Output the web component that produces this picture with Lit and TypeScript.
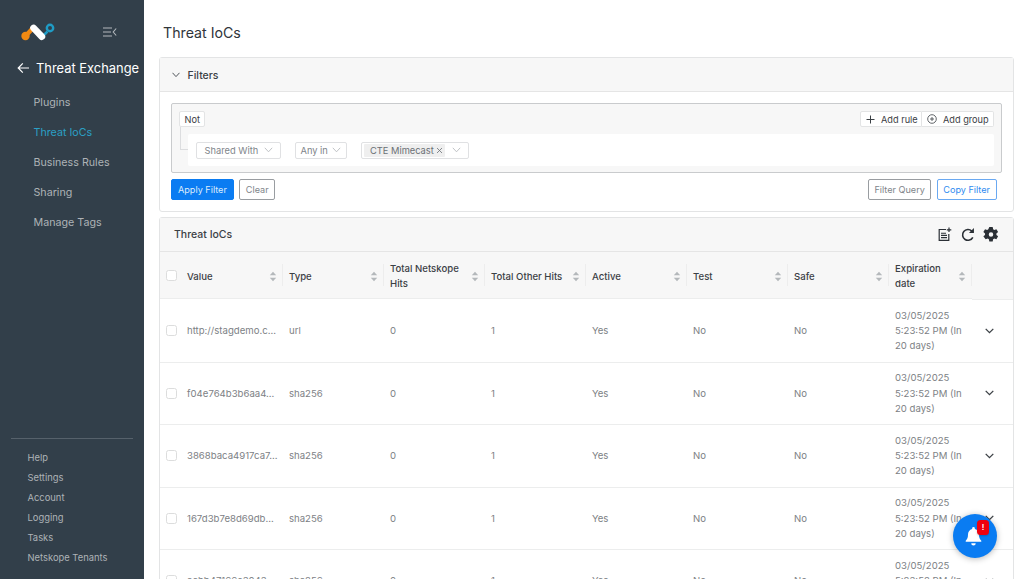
import { LitElement, html, css } from "lit";
import { customElement } from "lit/decorators.js";

const sortIcon = html`<svg class="sort" width="8" height="11" viewBox="0 0 8 11"><path d="M4 .8 7.2 4.2H.8z" fill="#b4b8bb"/><path d="M4 10.2.8 6.8h6.4z" fill="#b4b8bb"/></svg>`;
const chev = html`<svg class="sel" width="9" height="6" viewBox="0 0 9 6"><path d="M.8.8 4.5 4.8 8.2.8" fill="none" stroke="currentColor" stroke-width=".9"/></svg>`;

const rows = [
  ["http://stagdemo.c...", "url"],
  ["f04e764b3b6aa4...", "sha256"],
  ["3868baca4917ca7...", "sha256"],
  ["167d3b7e8d69db...", "sha256"],
  ["aebb47166c3043...", "sha256"],
];
const cols = ["Value", "Type", "Total Netskope Hits", "Total Other Hits", "Active", "Test", "Safe", "Expiration date"];

@customElement("app-root")
export class AppRoot extends LitElement {
  static styles = css`
    :host { display: block; height: 579px; overflow: hidden; position: relative; font-family: Inter, "Liberation Sans", sans-serif; background: #fff; color: #3b4045; }
    .app { display: flex; height: 579px; }
    aside { width: 144px; flex: none; background: #323f4a; display: flex; flex-direction: column; box-sizing: border-box; color: #aeb3b7; }
    .top { height: 56px; display: flex; align-items: center; padding: 8px 0 0 20px; box-sizing: border-box; }
    .logo { margin-left: 1px; flex: none; }
    .collapse { margin-left: 42px; flex: none; }
    .back { display: flex; align-items: center; height: 24px; padding-left: 17px; gap: 6px; color: #fff; font-size: 12.9px; white-space: nowrap; }
    .back svg { flex: none; }
    .nav { display: flex; flex-direction: column; padding: 8px 0 0 33.5px; }
    .nav div { height: 30px; line-height: 30px; font-size: 10.7px; white-space: nowrap; }
    .nav .on { color: #2ba0c6; }
    .foot { margin-top: auto; margin-left: 11px; margin-right: 11px; border-top: 1px solid #56616b; padding: 9px 0 11.5px 16.5px; font-size: 9.4px; }
    .foot div { height: 20px; line-height: 20px; white-space: nowrap; }
    main { flex: 1; min-width: 0; padding: 0 10px 0 15px; overflow: hidden; }
    h1 { margin: 0; height: 57px; line-height: 65px; padding-left: 4px; font-size: 14.2px; font-weight: 400; color: #30353a; }
    .card { border: 1px solid #e3e4e5; border-radius: 3px; background: #fff; }
    .card + .card { margin-top: 5px; }
    .chead { height: 34px; box-sizing: border-box; background: #f7f7f7; border-bottom: 1px solid #e5e5e5; display: flex; align-items: center; font-size: 10.5px; color: #3b4045; }
    .f-title { gap: 8px; padding: 1px 0 0 11.5px; font-weight: 500; }
    .f-body { padding: 11px; box-sizing: border-box; height: 119px; }
    .group { height: 70px; box-sizing: border-box; border: 1px solid #c9cbcd; border-radius: 2px; background: #f7f7f7; padding: 7px 7px 0 7px; position: relative; }
    .g-top { display: flex; justify-content: space-between; align-items: flex-start; }
    .tag { height: 16px; line-height: 15px; box-sizing: border-box; background: #fff; border: 1px solid #e3e4e5; border-radius: 2px; font-size: 9.2px; color: #3b4045; white-space: nowrap; }
    .not { padding: 0 4.5px; }
    .adds { display: flex; }
    .adds .tag { display: flex; align-items: center; padding-left: 5px; }
    .adds .r1 { width: 62px; border-radius: 2px 0 0 2px; gap: 6px; }
    .adds .r2 { width: 72px; border-left: 0; border-radius: 0 2px 2px 0; gap: 6px; }
    .adds svg { flex: none; }
    .rule { position: absolute; left: 9px; right: 7px; top: 30px; height: 32px; background: #fff; border-radius: 2px; display: flex; align-items: center; padding-left: 7.5px; font-size: 9.3px; color: #80858a; margin-left: 7px; }
    .link { position: absolute; left: 8px; top: 23px; width: 8px; height: 22px; border-left: 1px solid #dcdddf; border-bottom: 1px solid #dcdddf; }
    .sel { color: #b9bcbf; flex: none; }
    .box { height: 17px; box-sizing: border-box; border: 1px solid #e0e1e3; border-radius: 2px; display: flex; align-items: center; white-space: nowrap; }
    .b1 { width: 85.5px; padding-left: 8px; justify-content: space-between; padding-right: 7px; margin-right: 13.5px; }
    .b2 { width: 52px; padding-left: 5px; justify-content: space-between; padding-right: 5px; margin-right: 14px; }
    .b3 { width: 108px; padding-left: 2px; color: #6b7075; }
    .chip { background: #efefef; height: 13px; line-height: 13px; padding: 0 2px 0 6.5px; display: flex; align-items: center; gap: 2.5px; margin-right: 7px; border-radius: 1px; }
    .acts { display: flex; margin-top: 5.5px; justify-content: space-between; padding-right: 5.5px; }
    .acts > div { display: flex; gap: 5.5px; }
    .btn { height: 21.5px; box-sizing: border-box; border: 1px solid #999da1; border-radius: 2px; font-size: 9.1px; line-height: 19.5px; padding: 0 5.5px; color: #80858a; white-space: nowrap; }
    .btn.pri { background: #0a7cf2; border-color: #0a7cf2; color: #dcebfb; padding: 0 6px; }
    .btn.out { border-color: #6aa9f2; color: #2f8bf0; }
    .t-head { justify-content: space-between; padding: 0 13px 0 14px; font-weight: 500; }
    .tools { display: flex; align-items: center; color: #2b3036; }
    .tools .t2 { margin-left: 7.3px; }
    .tools .t3 { margin-left: 6.3px; }
    .grid { display: grid; grid-template-columns: 21px 102px 101px 101px 101px 101px 101px 101px 83px 1fr; }
    .th { height: 47px; background: #f7f7f7; display: flex; align-items: center; padding: 2px 4px 0 6px; box-sizing: border-box; justify-content: space-between; font-size: 9.6px; font-weight: 500; line-height: 15px; color: #3b4045; position: relative; border-bottom: 1px solid #eceded; }
    .th > span { display: block; max-width: 70px; }
    .th.n3 > span { max-width: 78px; }
    .th.n4 > span { max-width: 80px; }
    .th .sep { position: absolute; right: 0; top: 12px; bottom: 12px; width: 1px; background: #ededed; }
    .th .sort { margin-right: 2px; flex: none; }
    .cb { width: 11px; height: 11px; box-sizing: border-box; border: 1px solid #dcdddd; border-radius: 2.5px; background: #fff; display: block; }
    .ck { display: flex; align-items: center; justify-content: flex-end; box-sizing: border-box; }
    .ck .cb { margin-right: 4.5px; }
    .ckh { height: 47px; background: #f7f7f7; border-bottom: 1px solid #eceded; }
    .td { height: 62.5px; box-sizing: border-box; border-bottom: 1px solid #eceded; display: flex; align-items: center; padding-left: 6px; font-size: 9.6px; line-height: 15.3px; color: #7d8185; white-space: nowrap; }
    .td.exp { white-space: normal; padding-right: 8px; }
    .td.ex { justify-content: flex-end; padding-right: 19px; color: #3b4045; }
    .ckc { padding-left: 0; padding-right: 0; justify-content: flex-end; }
    .fab { position: absolute; left: 952.5px; top: 514px; width: 44px; height: 44px; border-radius: 50%; background: #0a7cf2; box-shadow: 0 1px 6px rgba(0,0,0,.28); display: flex; align-items: center; justify-content: center; }
    .fab svg { margin-right: 1.4px; }
    .badge { position: absolute; left: 24.5px; top: 6px; width: 12px; height: 15px; border-radius: 3.5px; background: #f0000f; color: #fff; font-size: 8px; font-weight: 600; line-height: 15px; text-align: center; box-shadow: 0 1px 2px rgba(0,0,0,.2); }
  `;

  render() {
    return html`<div class="app">
      <aside>
        <div class="top">
          <svg class="logo" width="40" height="24" viewBox="0 0 40 24">
            <path d="M4.5 16 13 7" stroke="#f28a13" stroke-width="4.5" fill="none"/>
            <circle cx="4.5" cy="16" r="4.2" fill="#f28a13"/>
            <path d="M21 17 26.5 11.5" stroke="#1f9cc6" stroke-width="2.5" fill="none"/>
            <circle cx="29" cy="8" r="3.2" fill="none" stroke="#1f9cc6" stroke-width="2.4"/>
            <path d="M12.6 8 20.8 16.6" stroke="#fff" stroke-width="6.8" stroke-linecap="round" fill="none"/>
          </svg>
          <svg class="collapse" width="14" height="10" viewBox="0 0 14 10"><path d="M0 1h9M0 5h8M0 9h9" stroke="#b3b8bc" stroke-width="1.1" fill="none"/><path d="M13.2 1.5 10.2 5l3 3.5" stroke="#b3b8bc" stroke-width="1.1" fill="none"/></svg>
        </div>
        <div class="back">
          <svg width="13" height="12" viewBox="0 0 13 12"><path d="M12 6H1.2M5.8 1.4 1.2 6l4.6 4.6" fill="none" stroke="#fff" stroke-width="1.2"/></svg>
          <span>Threat Exchange</span>
        </div>
        <div class="nav">
          <div>Plugins</div><div class="on">Threat IoCs</div><div>Business Rules</div><div>Sharing</div><div>Manage Tags</div>
        </div>
        <div class="foot">
          <div>Help</div><div>Settings</div><div>Account</div><div>Logging</div><div>Tasks</div><div>Netskope Tenants</div>
        </div>
      </aside>
      <main>
        <h1>Threat IoCs</h1>
        <section class="card">
          <div class="chead f-title">
            <svg width="8" height="6" viewBox="0 0 8 6"><path d="M.5.8 4 4.6 7.5.8" fill="none" stroke="#50555a" stroke-width="1"/></svg>
            <span>Filters</span>
          </div>
          <div class="f-body">
            <div class="group">
              <div class="g-top">
                <div class="tag not">Not</div>
                <div class="adds">
                  <div class="tag r1"><svg width="9" height="9" viewBox="0 0 9 9"><path d="M4.5.5v8M.5 4.5h8" stroke="#3b4045" stroke-width="1"/></svg><span>Add rule</span></div>
                  <div class="tag r2"><svg width="10" height="10" viewBox="0 0 10 10"><circle cx="5" cy="5" r="4.3" fill="none" stroke="#3b4045" stroke-width=".8"/><path d="M5 3v4M3 5h4" stroke="#3b4045" stroke-width=".8"/></svg><span>Add group</span></div>
                </div>
              </div>
              <div class="link"></div>
              <div class="rule">
                <div class="box b1"><span>Shared With</span>${chev}</div>
                <div class="box b2"><span>Any in</span>${chev}</div>
                <div class="box b3"><div class="chip"><span>CTE Mimecast</span><svg width="7" height="7" viewBox="0 0 7 7"><path d="M1 1l5 5M6 1 1 6" stroke="#6b7075" stroke-width=".8"/></svg></div>${chev}</div>
              </div>
            </div>
            <div class="acts">
              <div><div class="btn pri">Apply Filter</div><div class="btn">Clear</div></div>
              <div><div class="btn">Filter Query</div><div class="btn out">Copy Filter</div></div>
            </div>
          </div>
        </section>
        <section class="card">
          <div class="chead t-head">
            <span>Threat IoCs</span>
            <div class="tools">
              <svg width="15" height="15" viewBox="0 0 15 15"><path d="M9 2.5H2.2v10.8h9.6V7" fill="none" stroke="currentColor" stroke-width="1.2"/><path d="M4 6.2h5M4 8.4h6M4 10.6h6" stroke="currentColor" stroke-width="1.1"/><path d="M12 .5v4.6M9.8 2.8h4.5" stroke="currentColor" stroke-width="1.2"/></svg>
              <svg class="t2" width="16" height="16" viewBox="0 0 14 14"><path d="M11.2 9A4.7 4.7 0 1 1 10.3 3.6" fill="none" stroke="currentColor" stroke-width="1.4"/><path d="M12.2.9v4.4H7.8z" fill="currentColor"/></svg>
              <svg class="t3" width="18" height="18" viewBox="0 0 16 16"><path fill-rule="evenodd" fill="currentColor" d="M6.5.9h3l.4 2 1 .6 1.9-.7 1.5 2.6-1.5 1.3v1.2l1.5 1.3-1.5 2.6-1.9-.7-1 .6-.4 2h-3l-.4-2-1-.6-1.9.7L1.2 9.2l1.5-1.3V6.7L1.2 5.4l1.5-2.6 1.9.7 1-.6zM8 5.5a2 2 0 1 0 0 4 2 2 0 0 0 0-4z"/></svg>
            </div>
          </div>
          <div class="grid">
            <div class="ck ckh"><span class="cb"></span></div>
            ${cols.map((c, i) => html`<div class="th n${i + 1}"><span>${c}</span>${sortIcon}<i class="sep"></i></div>`)}
            <div class="ckh"></div>
            ${rows.map((r) => html`
              <div class="td ck ckc"><span class="cb"></span></div>
              <div class="td">${r[0]}</div>
              <div class="td">${r[1]}</div>
              <div class="td">0</div>
              <div class="td">1</div>
              <div class="td">Yes</div>
              <div class="td">No</div>
              <div class="td">No</div>
              <div class="td exp"><span>03/05/2025 5:23:52 PM (In 20 days)</span></div>
              <div class="td ex"><svg width="9" height="6" viewBox="0 0 9 6"><path d="M.7.9 4.5 4.7 8.3.9" fill="none" stroke="currentColor" stroke-width="1.3"/></svg></div>
            `)}
          </div>
        </section>
      </main>
    </div>
    <div class="fab">
      <svg width="19" height="23" viewBox="0 0 20 22"><path fill="#fff" d="M10 1a1.4 1.4 0 0 1 1.4 1.4v.6c3 .7 4.4 3.2 4.4 6.2 0 3 .8 4.8 2.4 6.2v1.1H1.8v-1.1c1.6-1.4 2.4-3.2 2.4-6.2 0-3 1.4-5.5 4.4-6.2v-.6A1.4 1.4 0 0 1 10 1z"/><path fill="#fff" d="M7.6 18h4.8a2.4 2.4 0 0 1-4.8 0z"/></svg>
      <div class="badge">!</div>
    </div>`;
  }
}
